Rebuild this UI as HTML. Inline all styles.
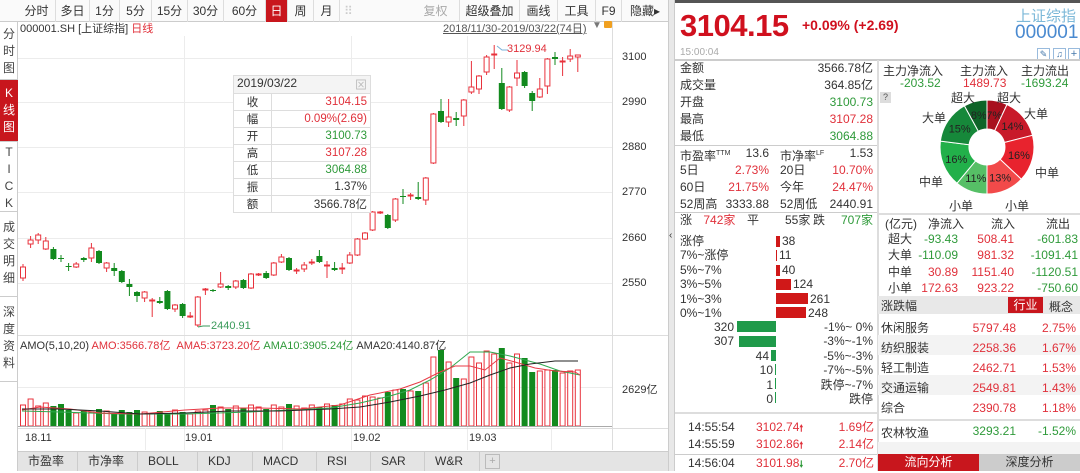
<!DOCTYPE html>
<html><head><meta charset="utf-8"><style>
*{margin:0;padding:0;box-sizing:border-box}
body{width:1080px;height:471px;overflow:hidden;background:#fff;font-family:"Liberation Sans","Noto Sans CJK SC",sans-serif;font-size:11px;color:#333;position:relative}
.a{position:absolute;white-space:nowrap}
.r{color:#e0303a}.g{color:#2f9a3a}.k{color:#333}
.tab{position:absolute;top:0;height:22px;line-height:22px;text-align:center;font-size:12px;border-right:1px solid #ddd;color:#333}
.side{position:absolute;left:0;width:18px;font-size:12px;text-align:center;line-height:17px;border-bottom:1px solid #ccc;color:#444}
.tt td{height:17px;border:1px solid #ddd;font-size:11.5px}
.btab{position:absolute;top:452px;height:19px;line-height:19px;font-size:12px;background:#e4e4e4;border-right:1px solid #ccc;padding-left:10px}
.row{position:absolute;left:680px;width:193px;height:17px;line-height:17px;font-size:12px}
.row span{position:absolute;right:0}
</style></head><body>
<!-- top toolbar -->
<div class="a" style="left:0;top:0;width:668px;height:22px;background:#fafafa;border-bottom:1px solid #ccc"></div>
<div class="tab" style="left:18px;width:38px">分时</div>
<div class="tab" style="left:56px;width:34px">多日</div>
<div class="tab" style="left:90px;width:30px">1分</div>
<div class="tab" style="left:120px;width:32px">5分</div>
<div class="tab" style="left:152px;width:36px">15分</div>
<div class="tab" style="left:188px;width:36px">30分</div>
<div class="tab" style="left:224px;width:42px">60分</div>
<div class="tab" style="left:266px;width:22px;background:#c8161d;color:#fff">日</div>
<div class="tab" style="left:288px;width:26px">周</div>
<div class="tab" style="left:314px;width:26px">月</div>
<div class="tab" style="left:340px;width:70px;border:none;color:#ccc;text-align:left;padding-left:4px">⠿</div>
<div class="tab" style="left:412px;width:48px;color:#aaa">复权</div>
<div class="tab" style="left:460px;width:60px">超级叠加</div>
<div class="tab" style="left:520px;width:38px">画线</div>
<div class="tab" style="left:558px;width:38px">工具</div>
<div class="tab" style="left:596px;width:26px">F9</div>
<div class="tab" style="left:622px;width:46px;border:none">隐藏▸</div>
<!-- sidebar -->
<div class="a" style="left:0;top:22px;width:18px;height:449px;border-right:1px solid #ccc"></div>
<div class="side" style="top:22px;height:58px;padding-top:4px">分<br>时<br>图</div>
<div class="side" style="top:80px;height:62px;padding-top:5px;background:#c8161d;color:#fff">K<br>线<br>图</div>
<div class="side" style="top:142px;height:70px;padding-top:2px">T<br>I<br>C<br>K</div>
<div class="side" style="top:212px;height:85px;padding-top:7px">成<br>交<br>明<br>细</div>
<div class="side" style="top:297px;height:85px;padding-top:7px">深<br>度<br>资<br>料</div>
<!-- chart header -->
<div class="a" style="left:20px;top:20px;font-size:11px;color:#333">000001.SH [上证综指] <span class="r">日线</span></div>
<div class="a" style="left:443px;top:20px;font-size:11px;color:#555;text-decoration:underline">2018/11/30-2019/03/22(74日)</div>
<div class="a" style="left:592px;top:20px;font-size:10px;color:#777">▼</div>
<div class="a" style="left:604px;top:21px;width:8px;height:7px;background:#f0a020;border-radius:1px"></div>
<svg class="a" style="left:0;top:0" width="668" height="471">
<g stroke="#ececec" stroke-width="1">
<line x1="18" y1="58.5" x2="612" y2="58.5"/><line x1="18" y1="102.5" x2="612" y2="102.5"/><line x1="18" y1="147.5" x2="612" y2="147.5"/><line x1="18" y1="192.5" x2="612" y2="192.5"/><line x1="18" y1="238.5" x2="612" y2="238.5"/><line x1="18" y1="283.5" x2="612" y2="283.5"/>
<line x1="184.5" y1="36" x2="184.5" y2="450"/><line x1="351.5" y1="36" x2="351.5" y2="450"/><line x1="467.5" y1="36" x2="467.5" y2="450"/>
<line x1="18" y1="335.5" x2="668" y2="335.5" stroke="#ddd"/><line x1="18" y1="387.5" x2="612" y2="387.5"/><line x1="18" y1="428.5" x2="668" y2="428.5" stroke="#ddd"/>
<line x1="612.5" y1="22" x2="612.5" y2="450" stroke="#ddd"/>
<line x1="145.5" y1="428" x2="145.5" y2="450"/><line x1="282.5" y1="428" x2="282.5" y2="450"/><line x1="551.5" y1="428" x2="551.5" y2="450"/>
</g>
<g id="cd"></g><g id="vol"></g>
<polyline fill="none" stroke="#7ab0d8" stroke-width="1" points="497,46 502,50 508,50"/>
<polyline fill="none" stroke="#3a9a5a" stroke-width="1" points="198,327 203,326 210,326"/>
<polyline fill="none" stroke="#2fa84f" stroke-width="1" points="22,411 60,412 120,414 185,414 250,412 330,408 360,403 390,396 410,390 430,380 450,368 470,352 490,352 510,356 540,364 560,371 580,375"/>
<polyline fill="none" stroke="#e83a46" stroke-width="1" points="22,410 40,407 70,409 100,413 140,414 185,410 220,408 260,408 300,409 340,405 370,395 400,389 420,382 440,372 455,366 470,366 485,370 500,358 515,362 535,368 555,371 575,372 580,375"/>
<polyline fill="none" stroke="#222" stroke-width="1" points="22,409 60,409 100,411 140,414 185,413 230,411 280,411 330,409 360,407 390,402 420,396 445,390 470,383 490,375 510,368 530,364 555,361 578,361"/>
<line x1="18" y1="426.5" x2="612" y2="426.5" stroke="#aaa"/>
</svg>
<div class="a r" style="left:507px;top:43px;font-size:11px">3129.94</div>
<div class="a" style="left:211px;top:320px;font-size:11px;color:#3a9a5a">2440.91</div>
<div class="a" style="left:622px;top:51px">3100</div>
<div class="a" style="left:622px;top:96px">2990</div>
<div class="a" style="left:622px;top:141px">2880</div>
<div class="a" style="left:622px;top:186px">2770</div>
<div class="a" style="left:622px;top:232px">2660</div>
<div class="a" style="left:622px;top:277px">2550</div>
<div class="a" style="left:622px;top:381px">2629亿</div>
<div class="a" style="left:20px;top:337px;font-size:11px">AMO(5,10,20) <span class="r">AMO:3566.78亿</span> &nbsp;<span class="r">AMA5:3723.20亿</span> <span class="g">AMA10:3905.24亿</span> <span>AMA20:4140.87亿</span></div>
<div class="a" style="left:25px;top:432px">18.11</div>
<div class="a" style="left:185px;top:432px">19.01</div>
<div class="a" style="left:353px;top:432px">19.02</div>
<div class="a" style="left:469px;top:432px">19.03</div>
<!-- tooltip -->
<table class="a tt" style="left:233px;top:75px;width:138px;border-collapse:collapse;background:#fff">
<tr><td colspan="2" style="background:#f4f4f4;padding-left:3px;font-size:12px">2019/03/22<span style="float:right;color:#bbb;padding-right:3px">⊠</span></td></tr>
<tr><td style="width:38px;text-align:center">收</td><td style="text-align:right;padding-right:3px" class="r">3104.15</td></tr>
<tr><td style="text-align:center">幅</td><td style="text-align:right;padding-right:3px" class="r">0.09%(2.69)</td></tr>
<tr><td style="text-align:center">开</td><td style="text-align:right;padding-right:3px" class="g">3100.73</td></tr>
<tr><td style="text-align:center">高</td><td style="text-align:right;padding-right:3px" class="r">3107.28</td></tr>
<tr><td style="text-align:center">低</td><td style="text-align:right;padding-right:3px" class="g">3064.88</td></tr>
<tr><td style="text-align:center">振</td><td style="text-align:right;padding-right:3px">1.37%</td></tr>
<tr><td style="text-align:center">额</td><td style="text-align:right;padding-right:3px">3566.78亿</td></tr>
</table>
<!-- bottom tabs -->
<div class="a" style="left:18px;top:451px;width:650px;height:20px;background:#e4e4e4;border-top:1px solid #ccc"></div>
<div class="btab" style="left:18px;width:60px">市盈率</div>
<div class="btab" style="left:78px;width:60px">市净率</div>
<div class="btab" style="left:138px;width:60px">BOLL</div>
<div class="btab" style="left:198px;width:55px">KDJ</div>
<div class="btab" style="left:253px;width:64px">MACD</div>
<div class="btab" style="left:317px;width:54px">RSI</div>
<div class="btab" style="left:371px;width:54px">SAR</div>
<div class="btab" style="left:425px;width:55px">W&amp;R</div>
<div class="a" style="left:485px;top:454px;width:15px;height:15px;border:1px solid #bbb;color:#aaa;text-align:center;line-height:13px">+</div>
<!-- divider -->
<div class="a" style="left:668px;top:0;width:7px;height:471px;background:#e8e8e8;border-left:1px solid #ccc;border-right:1px solid #ccc"></div>
<div class="a" style="left:669px;top:230px;font-size:10px;color:#333">‹</div>
<!-- right panel -->
<div class="a" style="left:675px;top:0;width:405px;height:3px;background:#555"></div>
<div class="a" style="left:680px;top:8px;font-size:31px;font-weight:bold;color:#d0101e;letter-spacing:-0.5px">3104.15</div>
<div class="a" style="left:802px;top:17px;font-size:14px;font-weight:bold;color:#d0101e">+0.09% (+2.69)</div>
<div class="a" style="left:1016px;top:5px;font-size:15px;color:#7cb8d8">上证综指</div>
<div class="a" style="left:1015px;top:22px;font-size:19px;color:#4a8ad0">000001</div>
<div class="a" style="left:680px;top:47px;font-size:10px;color:#aaa">15:00:04</div>
<div class="a" style="left:1037px;top:48px;width:13px;height:12px;border:1px solid #9bd;color:#47a;font-size:9px;text-align:center;line-height:10px">✎</div>
<div class="a" style="left:1053px;top:48px;width:13px;height:12px;border:1px solid #9bd;color:#47a;font-size:9px;text-align:center;line-height:10px">♫</div>
<div class="a" style="left:1068px;top:48px;width:12px;height:12px;border:1px solid #9bd;color:#47a;font-size:11px;text-align:center;line-height:10px">+</div>
<div class="a" style="left:675px;top:59px;width:405px;height:2px;background:#ccc"></div>
<div class="a" style="left:877px;top:60px;width:2px;height:411px;background:#ddd"></div>
<div class="row" style="top:60px">金额<span>3566.78亿</span></div>
<div class="row" style="top:77px">成交量<span>364.85亿</span></div>
<div class="row" style="top:94px">开盘<span class="g">3100.73</span></div>
<div class="row" style="top:111px">最高<span class="r">3107.28</span></div>
<div class="row" style="top:128px">最低<span class="g">3064.88</span></div>
<div class="a" style="left:675px;top:145px;width:202px;height:1px;background:#ccc"></div>
<div class="row" style="top:145px">市盈率<sup style="font-size:7px">TTM</sup><span style="right:104px">13.6</span><i style="position:absolute;left:100px;font-style:normal">市净率<sup style="font-size:7px">LF</sup></i><span>1.53</span></div>
<div class="row" style="top:162px">5日<span class="r" style="right:104px">2.73%</span><i style="position:absolute;left:100px;font-style:normal">20日</i><span class="r">10.70%</span></div>
<div class="row" style="top:179px">60日<span class="r" style="right:104px">21.75%</span><i style="position:absolute;left:100px;font-style:normal">今年</i><span class="r">24.47%</span></div>
<div class="row" style="top:196px">52周高<span style="right:104px">3333.88</span><i style="position:absolute;left:100px;font-style:normal">52周低</i><span>2440.91</span></div>
<div class="a" style="left:675px;top:212px;width:202px;height:1px;background:#ccc"></div>
<div class="row" style="top:212px">涨 <b class="r" style="font-weight:normal;margin-left:8px">742家</b><i style="position:absolute;left:67px;font-style:normal">平</i><i style="position:absolute;left:105px;font-style:normal">55家</i><i style="position:absolute;left:133px;font-style:normal">跌</i><span class="g">707家</span></div>
<!-- distribution -->
<div class="a" style="left:680px;top:234px;line-height:14.4px;font-size:12px">涨停<br>7%~涨停<br>5%~7%<br>3%~5%<br>1%~3%<br>0%~1%</div>
<div class="a" style="left:776px;top:236px;width:4px;height:11px;background:#d01818"></div>
<div class="a" style="left:776px;top:250px;width:1px;height:11px;background:#d01818"></div>
<div class="a" style="left:776px;top:265px;width:4px;height:11px;background:#d01818"></div>
<div class="a" style="left:776px;top:279px;width:15px;height:11px;background:#d01818"></div>
<div class="a" style="left:776px;top:293px;width:32px;height:11px;background:#d01818"></div>
<div class="a" style="left:776px;top:307px;width:30px;height:11px;background:#d01818"></div>
<div class="a" style="left:782px;top:234px;line-height:14.4px;font-size:12px">38<br><span style="margin-left:-3px">11</span><br>40<br><span style="margin-left:11px">124</span><br><span style="margin-left:28px">261</span><br><span style="margin-left:26px">248</span></div>
<div class="a" style="left:737px;top:321px;width:39px;height:11px;background:#1f9a4a"></div>
<div class="a" style="left:739px;top:336px;width:37px;height:11px;background:#1f9a4a"></div>
<div class="a" style="left:771px;top:350px;width:5px;height:11px;background:#1f9a4a"></div>
<div class="a" style="left:775px;top:364px;width:1px;height:11px;background:#1f9a4a"></div>
<div class="a" style="left:775px;top:378px;width:1px;height:11px;background:#1f9a4a"></div>
<div class="a" style="left:775px;top:392px;width:1px;height:11px;background:#1f9a4a"></div>
<div class="a" style="left:680px;top:320px;width:54px;text-align:right;line-height:14.4px;font-size:12px">320<br>307</div>
<div class="a" style="left:720px;top:349px;width:49px;text-align:right;line-height:14.4px;font-size:12px">44<br><span style="margin-right:-4px">10</span><br><span style="margin-right:-4px">1</span><br><span style="margin-right:-4px">0</span></div>
<div class="a" style="left:800px;top:320px;width:73px;text-align:right;line-height:14.4px;font-size:12px">-1%~ 0%<br>-3%~-1%<br>-5%~-3%<br>-7%~-5%<br>跌停~-7%<br>跌停</div>
<div class="a" style="left:675px;top:412px;width:202px;height:2px;background:#ddd"></div>
<div class="row" style="top:419px;left:688px;width:186px;font-size:12px">14:55:54<i class="r" style="position:absolute;left:68px;font-style:normal">3102.74<b style="font-size:9px">🠕</b></i><span class="r">1.69亿</span></div>
<div class="row" style="top:436px;left:688px;width:186px;font-size:12px">14:55:59<i class="r" style="position:absolute;left:68px;font-style:normal">3102.86<b style="font-size:9px">🠕</b></i><span class="r">2.14亿</span></div>
<div class="a" style="left:675px;top:454px;width:202px;height:1px;background:#ccc"></div>
<div class="row" style="top:455px;left:688px;width:186px;font-size:12px">14:56:04<i class="r" style="position:absolute;left:68px;font-style:normal">3101.98<b class="g" style="font-size:9px">🠗</b></i><span class="r">2.70亿</span></div>
<!-- money flow -->
<div class="a" style="left:883px;top:62px;font-size:12px">主力净流入</div>
<div class="a" style="left:960px;top:62px;font-size:12px">主力流入</div>
<div class="a" style="left:1021px;top:62px;font-size:12px">主力流出</div>
<div class="a g" style="left:900px;top:76px;font-size:12px">-203.52</div>
<div class="a r" style="left:963px;top:76px;font-size:12px">1489.73</div>
<div class="a g" style="left:1021px;top:76px;font-size:12px">-1693.24</div>
<div class="a" style="left:880px;top:92px;width:11px;height:11px;background:#ddd;font-size:9px;text-align:center;line-height:11px;color:#555">?</div>
<svg class="a" style="left:878px;top:88px" width="202" height="124" id="pie"></svg>
<div class="a" style="left:951px;top:89px;font-size:12px">超大</div>
<div class="a" style="left:997px;top:89px;font-size:12px">超大</div>
<div class="a" style="left:922px;top:109px;font-size:12px">大单</div>
<div class="a" style="left:1024px;top:105px;font-size:12px">大单</div>
<div class="a" style="left:1035px;top:164px;font-size:12px">中单</div>
<div class="a" style="left:919px;top:173px;font-size:12px">中单</div>
<div class="a" style="left:949px;top:197px;font-size:12px">小单</div>
<div class="a" style="left:1005px;top:197px;font-size:12px">小单</div>
<div class="a" style="left:878px;top:213px;width:202px;height:2px;background:#ddd"></div>
<div class="a" style="left:885px;top:215px;font-size:12px">(亿元)</div>
<div class="a" style="left:928px;top:215px;font-size:12px">净流入</div>
<div class="a" style="left:991px;top:215px;font-size:12px">流入</div>
<div class="a" style="left:1046px;top:215px;font-size:12px">流出</div>
<div class="a" style="left:888px;top:231px;font-size:12px;line-height:16.3px">超大<br>大单<br>中单<br>小单</div>
<div class="a" style="left:900px;top:231px;width:58px;text-align:right;font-size:12px;line-height:16.3px"><span class="g">-93.43</span><br><span class="g">-110.09</span><br><span class="r">30.89</span><br><span class="r">172.63</span></div>
<div class="a r" style="left:960px;top:231px;width:54px;text-align:right;font-size:12px;line-height:16.3px">508.41<br>981.32<br>1151.40<br>923.22</div>
<div class="a g" style="left:1020px;top:231px;width:58px;text-align:right;font-size:12px;line-height:16.3px">-601.83<br>-1091.41<br>-1120.51<br>-750.60</div>
<div class="a" style="left:878px;top:296px;width:202px;height:18px;background:#e8e8e8"></div>
<div class="a" style="left:881px;top:297px;font-size:12px">涨跌幅</div>
<div class="a" style="left:1008px;top:297px;width:35px;height:16px;background:#c8161d;color:#fff;font-size:12px;text-align:center;line-height:16px">行业</div>
<div class="a" style="left:1049px;top:298px;font-size:12px">概念</div>
<div class="a" style="left:878px;top:335px;width:202px;height:20px;background:#f3f3f3"></div>
<div class="a" style="left:878px;top:375px;width:202px;height:20px;background:#f3f3f3"></div>
<div class="a" style="left:881px;top:318px;font-size:12px;line-height:20px">休闲服务<br>纺织服装<br>轻工制造<br>交通运输<br>综合</div>
<div class="a r" style="left:960px;top:318px;width:56px;text-align:right;font-size:12px;line-height:20px">5797.48<br>2258.36<br>2462.71<br>2549.81<br>2390.78</div>
<div class="a r" style="left:1020px;top:318px;width:56px;text-align:right;font-size:12px;line-height:20px">2.75%<br>1.67%<br>1.53%<br>1.43%<br>1.18%</div>
<div class="a" style="left:878px;top:419px;width:202px;height:2px;background:#ddd"></div>
<div class="a" style="left:881px;top:424px;font-size:12px">农林牧渔</div>
<div class="a g" style="left:960px;top:424px;width:56px;text-align:right;font-size:12px">3293.21</div>
<div class="a g" style="left:1020px;top:424px;width:56px;text-align:right;font-size:12px">-1.52%</div>
<div class="a" style="left:878px;top:442px;width:202px;height:12px;background:#f3f3f3"></div>
<div class="a" style="left:878px;top:454px;width:101px;height:17px;background:#c8161d;color:#fff;font-size:12px;text-align:center;line-height:17px">流向分析</div>
<div class="a" style="left:979px;top:454px;width:101px;height:17px;background:#ccc;color:#333;font-size:12px;text-align:center;line-height:17px">深度分析</div>
<script>
var C=[[267,278,1,264,281],[240,244,1,236,248],[235,240,1,233,244],[241,249,1,237,250],[249,259,0,247,260],[258,259,0,255,262],[266,267,0,263,271],[264,267,1,262,268],[258,260,0,257,262],[248,258,1,243,262],[251,263,0,250,264],[263,268,1,262,272],[268,271,0,263,276],[271,282,0,270,283],[284,287,0,279,296],[292,296,0,291,302],[292,298,1,291,302],[300,301,1,298,317],[301,303,0,297,304],[291,309,0,290,310],[305,309,1,304,312],[304,316,0,303,318],[316,317,1,312,318],[297,325,1,296,327],[289,290,1,288,295],[290,291,0,289,292],[284,287,1,272,288],[286,288,0,285,290],[281,287,1,280,289],[280,288,0,279,289],[274,288,1,273,289],[274,275,1,273,276],[273,278,0,271,279],[263,275,1,262,276],[257,262,1,254,263],[258,270,0,257,271],[270,271,1,268,274],[265,269,1,262,272],[262,263,1,259,265],[256,262,0,250,263],[265,266,1,261,278],[268,270,0,262,271],[268,269,1,263,274],[255,263,1,252,264],[239,255,1,238,256],[233,239,1,232,240],[212,230,1,211,231],[212,213,1,211,214],[215,228,0,214,229],[199,220,1,198,222],[196,197,0,189,204],[195,196,1,193,200],[197,199,0,182,200],[178,200,1,177,205],[114,163,1,113,164],[111,122,0,99,123],[117,122,1,99,127],[118,120,0,112,126],[100,116,1,99,126],[87,92,1,61,94],[76,89,1,75,94],[57,72,1,55,75],[54,55,1,45,69],[83,109,0,68,110],[87,110,1,86,112],[73,78,1,60,86],[72,86,0,71,88],[93,101,0,91,111],[89,97,1,78,98],[59,86,1,58,94],[57,59,0,52,65],[61,62,1,57,76],[56,59,1,49,62],[55,57,1,55,72]];
var V=function(x){var P=[[22,408],[30,398],[37,404],[60,405],[70,411],[200,412],[210,407],[330,406],[350,400],[385,395],[398,388],[405,392],[425,387],[432,357],[441,352],[450,364],[458,380],[464,380],[472,354],[480,367],[488,348],[496,353],[503,348],[511,366],[519,353],[526,359],[534,373],[542,372],[549,368],[557,373],[565,373],[572,367],[580,373]];for(var i=1;i<P.length;i++){if(x<=P[i][0]){var a=P[i-1],b=P[i];return a[1]+(b[1]-a[1])*(x-a[0])/(b[0]-a[0]);}}return 373;};
var s='',v='',rd='#e8323c',gn='#128a1e';
C.forEach(function(c,i){var x=23+i*7.6,col=c[2]?rd:gn;s+='<line x1="'+x+'" y1="'+c[3]+'" x2="'+x+'" y2="'+c[4]+'" stroke="'+col+'"/>';var h=Math.max(1,c[1]-c[0]);if(c[2])s+='<rect x="'+(x-2.5)+'" y="'+c[0]+'" width="5" height="'+h+'" fill="#fff" stroke="'+col+'"/>';else s+='<rect x="'+(x-3)+'" y="'+c[0]+'" width="6" height="'+h+'" fill="'+col+'"/>';var t=Math.round(V(x)+((i*37)%5)-2);if(c[2])v+='<rect x="'+(x-2.5)+'" y="'+t+'" width="5" height="'+(426-t)+'" fill="#fff" stroke="'+rd+'"/>';else v+='<rect x="'+(x-3)+'" y="'+t+'" width="6" height="'+(426-t)+'" fill="'+gn+'"/>';});
document.getElementById('cd').innerHTML=s;document.getElementById('vol').innerHTML=v;
var segs=[[7,'#a8101e'],[14,'#c81a2a'],[16,'#e8232e'],[13,'#f24a4a'],[11,'#56bf66'],[16,'#22b04a'],[15,'#16883a'],[8,'#0e6428']],cx=109,cy=59,R=47,r=18,a0=-Math.PI/2,p='';
segs.forEach(function(g){var a1=a0+g[0]/100*2*Math.PI,l=g[0]>50?1:0;var f=function(rr,a){return (cx+rr*Math.cos(a)).toFixed(1)+','+(cy+rr*Math.sin(a)).toFixed(1)};p+='<path d="M'+f(R,a0)+' A'+R+','+R+' 0 0 1 '+f(R,a1)+' L'+f(r,a1)+' A'+r+','+r+' 0 0 0 '+f(r,a0)+' Z" fill="'+g[1]+'" stroke="#fff" stroke-width="1"/>';var am=(a0+a1)/2;p+='<text x="'+(cx+33*Math.cos(am))+'" y="'+(cy+33*Math.sin(am)+4)+'" font-size="11" text-anchor="middle" fill="#222" font-family="Liberation Sans">'+g[0]+'%</text>';a0=a1;});
document.getElementById('pie').innerHTML=p;
</script>
</body></html>
